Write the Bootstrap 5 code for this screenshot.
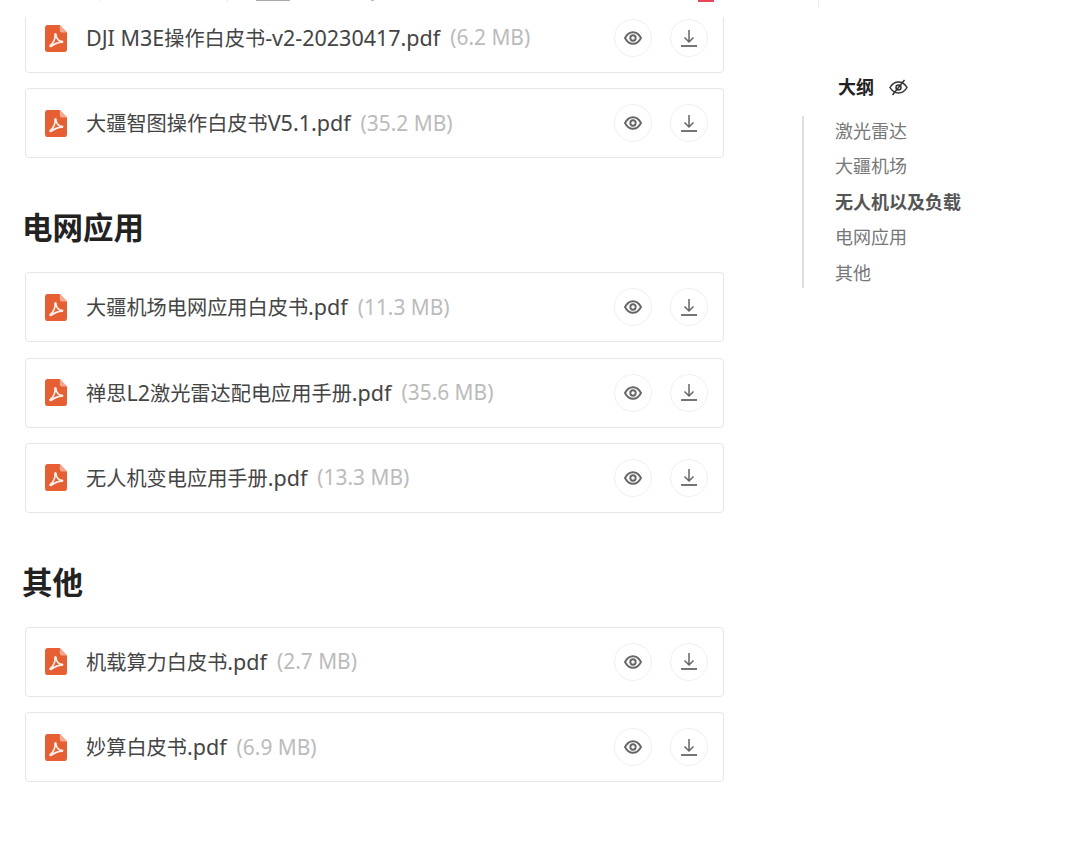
<!DOCTYPE html>
<html lang="zh-CN">
<head>
    <meta charset="UTF-8">
    <meta name="viewport" content="width=device-width, initial-scale=1.0">
    <title>白皮书下载</title>
    <link href="https://cdn.jsdelivr.net/npm/bootstrap@5.3.0/dist/css/bootstrap.min.css" rel="stylesheet">
    <style>
        body {
            background-color: #fff;
            color: #444;
            font-family: "Noto Sans", "Noto Sans CJK SC", sans-serif;
        }
        .page-wrap {
            padding: 3px 0 0 25px;
        }
        .doc-col {
            width: 699px;
            flex: none;
        }
        .doc-title {
            font-size: 30.500px;
            font-weight: 700;
            line-height: 40px;
            color: #222;
            margin: 49px 0 25px -3px;
        }
        .doc-row {
            height: 70px;
            margin-bottom: 15.33px;
            border-color: #e6e6e6;
            border-radius: 4px;
            padding: 0 15px 0 19px;
        }
        .doc-name {
            font-size: 20.2px;
            margin-left: 19px;
        }
        /* latin part runs a bit wider than the CJK part in the original font */
        .doc-lat {
            font-size: 21.5px;
        }
        .doc-size {
            font-size: 20.9px;
            color: #bbb;
            margin-left: 10px;
        }
        .pdf-icon {
            width: 22px;
            height: 27px;
            flex: none;
        }
        .btn-pair {
            gap: 18px;
        }
        .round-btn {
            width: 38px;
            height: 38px;
            border: 1px solid #f0f0f0;
            border-radius: 50%;
            background: #fff;
            padding: 0;
            color: #666;
        }
        .toc-col {
            margin: 0 0 0 78px;
            padding-top: 71px;
        }
        .toc-head {
            font-size: 18px;
            font-weight: 700;
            color: #222;
            line-height: 26px;
            margin: 0 0 16px 36px;
            gap: 15px;
        }
        .toc-list {
            border-left: 2px solid #ddd;
            padding-left: 31px;
            row-gap: 5.4px;
        }
        .toc-link {
            font-size: 18px;
            line-height: 30px;
            color: #777;
        }
        .toc-link.is-on {
            font-weight: 700;
            color: #555;
        }
        .top-cover {
            position: absolute;
            top: 0;
            left: 0;
            right: 0;
            height: 17px;
            background: #fff;
            z-index: 10;
        }
        .top-bit {
            position: absolute;
            top: 0;
            height: 2px;
        }
    </style>
</head>
<body>
    <svg width="0" height="0" class="position-absolute">
        <symbol id="ic-pdf" viewBox="0 0 23 27" preserveAspectRatio="none">
            <path d="M2.5 0H15.5L23 7.5V24.5A2.5 2.5 0 0 1 20.500 27H2.500A2.500 2.500 0 0 1 0 24.500V2.500A2.500 2.500 0 0 1 2.500 0Z" fill="#e55f33"/>
            <path d="M15.500 0L23 7.500H17.500A2 2 0 0 1 15.500 5.500Z" fill="#f3a88f"/>
            <path d="M11 9C10.400 9 10.300 9.800 10.500 11C10.900 13.500 8.500 18.300 5.800 20.200C4.900 20.900 5.400 21.800 6.300 21.300C8.800 19.700 12.500 17.200 17.800 17.200C18.600 17.200 18.600 16.400 17.800 16.400C14.500 16.400 12 13.500 11.600 10.500C11.500 9.600 11.500 9 11 9Z" fill="none" stroke="#fdf0ea" stroke-width="1.800" stroke-linejoin="round"/>
        </symbol>
        <symbol id="ic-eye" viewBox="0 0 18 14">
            <path d="M1 7C3 3.200 5.800 1.200 9 1.200S15 3.200 17 7C15 10.800 12.200 12.800 9 12.800S3 10.800 1 7Z" fill="none" stroke="currentColor" stroke-width="1.900"/>
            <circle cx="9" cy="7" r="2.700" fill="none" stroke="currentColor" stroke-width="1.900"/>
        </symbol>
        <symbol id="ic-down" viewBox="0 0 16 17">
            <path d="M8 0V11.500M3.500 7.500L8 12L12.500 7.500" fill="none" stroke="currentColor" stroke-width="1.500"/>
            <path d="M0 16H16" fill="none" stroke="currentColor" stroke-width="1.800"/>
        </symbol>
    </svg>

    <div class="top-cover">
        <span class="top-bit" style="left:100px;width:1px;background:#eee"></span>
        <span class="top-bit" style="left:227px;width:1px;background:#e6e6e6"></span>
        <span class="top-bit" style="left:256px;width:34px;height:1px;background:#aaa"></span>
        <span class="top-bit" style="left:371px;width:3px;height:1px;background:#bbb"></span>
        <span class="top-bit" style="left:698px;width:16px;background:#e8455a"></span>
        <span class="top-bit" style="left:818px;width:1px;height:8px;background:#eee"></span>
    </div>

    <div class="page-wrap d-flex align-items-start">
        <div class="doc-col">
            <div class="card doc-row flex-row align-items-center">
                <svg class="pdf-icon"><use href="#ic-pdf"/></svg>
                <span class="doc-name"><span class="doc-lat">DJI M3E</span>操作白皮书<span class="doc-lat">-v2-20230417.pdf</span></span>
                <span class="doc-size">(6.2 MB)</span>
                <div class="d-flex ms-auto btn-pair">
                    <button class="round-btn d-flex align-items-center justify-content-center"><svg width="18" height="14"><use href="#ic-eye"/></svg></button>
                    <button class="round-btn d-flex align-items-center justify-content-center"><svg width="16" height="17"><use href="#ic-down"/></svg></button>
                </div>
            </div>
            <div class="card doc-row flex-row align-items-center">
                <svg class="pdf-icon"><use href="#ic-pdf"/></svg>
                <span class="doc-name">大疆智图操作白皮书<span class="doc-lat">V5.1.pdf</span></span>
                <span class="doc-size">(35.2 MB)</span>
                <div class="d-flex ms-auto btn-pair">
                    <button class="round-btn d-flex align-items-center justify-content-center"><svg width="18" height="14"><use href="#ic-eye"/></svg></button>
                    <button class="round-btn d-flex align-items-center justify-content-center"><svg width="16" height="17"><use href="#ic-down"/></svg></button>
                </div>
            </div>

            <h2 class="doc-title">电网应用</h2>
            <div class="card doc-row flex-row align-items-center">
                <svg class="pdf-icon"><use href="#ic-pdf"/></svg>
                <span class="doc-name">大疆机场电网应用白皮书<span class="doc-lat">.pdf</span></span>
                <span class="doc-size">(11.3 MB)</span>
                <div class="d-flex ms-auto btn-pair">
                    <button class="round-btn d-flex align-items-center justify-content-center"><svg width="18" height="14"><use href="#ic-eye"/></svg></button>
                    <button class="round-btn d-flex align-items-center justify-content-center"><svg width="16" height="17"><use href="#ic-down"/></svg></button>
                </div>
            </div>
            <div class="card doc-row flex-row align-items-center">
                <svg class="pdf-icon"><use href="#ic-pdf"/></svg>
                <span class="doc-name">禅思<span class="doc-lat">L2</span>激光雷达配电应用手册<span class="doc-lat">.pdf</span></span>
                <span class="doc-size">(35.6 MB)</span>
                <div class="d-flex ms-auto btn-pair">
                    <button class="round-btn d-flex align-items-center justify-content-center"><svg width="18" height="14"><use href="#ic-eye"/></svg></button>
                    <button class="round-btn d-flex align-items-center justify-content-center"><svg width="16" height="17"><use href="#ic-down"/></svg></button>
                </div>
            </div>
            <div class="card doc-row flex-row align-items-center">
                <svg class="pdf-icon"><use href="#ic-pdf"/></svg>
                <span class="doc-name">无人机变电应用手册<span class="doc-lat">.pdf</span></span>
                <span class="doc-size">(13.3 MB)</span>
                <div class="d-flex ms-auto btn-pair">
                    <button class="round-btn d-flex align-items-center justify-content-center"><svg width="18" height="14"><use href="#ic-eye"/></svg></button>
                    <button class="round-btn d-flex align-items-center justify-content-center"><svg width="16" height="17"><use href="#ic-down"/></svg></button>
                </div>
            </div>

            <h2 class="doc-title">其他</h2>
            <div class="card doc-row flex-row align-items-center">
                <svg class="pdf-icon"><use href="#ic-pdf"/></svg>
                <span class="doc-name">机载算力白皮书<span class="doc-lat">.pdf</span></span>
                <span class="doc-size">(2.7 MB)</span>
                <div class="d-flex ms-auto btn-pair">
                    <button class="round-btn d-flex align-items-center justify-content-center"><svg width="18" height="14"><use href="#ic-eye"/></svg></button>
                    <button class="round-btn d-flex align-items-center justify-content-center"><svg width="16" height="17"><use href="#ic-down"/></svg></button>
                </div>
            </div>
            <div class="card doc-row flex-row align-items-center">
                <svg class="pdf-icon"><use href="#ic-pdf"/></svg>
                <span class="doc-name">妙算白皮书<span class="doc-lat">.pdf</span></span>
                <span class="doc-size">(6.9 MB)</span>
                <div class="d-flex ms-auto btn-pair">
                    <button class="round-btn d-flex align-items-center justify-content-center"><svg width="18" height="14"><use href="#ic-eye"/></svg></button>
                    <button class="round-btn d-flex align-items-center justify-content-center"><svg width="16" height="17"><use href="#ic-down"/></svg></button>
                </div>
            </div>
        </div>

        <div class="toc-col">
            <div class="toc-head d-flex align-items-center">
                <span>大纲</span>
                <svg width="19" height="17" viewBox="0 0 19 17" fill="none" stroke="#333" stroke-width="1.500">
                    <path d="M1 8.500C3 5 5.800 3 9.500 3S16 5 18 8.500C16 12 13.200 14 9.500 14S3 12 1 8.500Z"/>
                    <circle cx="9.500" cy="8.500" r="2.500"/>
                    <path d="M15.500 1L3.500 16"/>
                </svg>
            </div>
            <nav class="toc-list d-flex flex-column">
                <a class="toc-link text-decoration-none" href="#">激光雷达</a>
                <a class="toc-link text-decoration-none" href="#">大疆机场</a>
                <a class="toc-link text-decoration-none is-on" href="#">无人机以及负载</a>
                <a class="toc-link text-decoration-none" href="#">电网应用</a>
                <a class="toc-link text-decoration-none" href="#">其他</a>
            </nav>
        </div>
    </div>

    <script src="https://cdn.jsdelivr.net/npm/bootstrap@5.3.0/dist/js/bootstrap.bundle.min.js"></script>
</body>
</html>
